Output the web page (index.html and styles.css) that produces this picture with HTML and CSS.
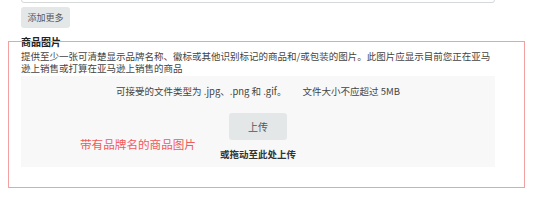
FILE: index.html
```html
<!DOCTYPE html>
<html lang="zh-CN">
<head>
    <meta charset="UTF-8">
    <meta name="viewport" content="width=device-width, initial-scale=1.0">
    <title>商品图片</title>
    <link rel="stylesheet" href="styles.css">
</head>
<body>
    <div class="container">
        <div class="prev-field"></div>
        <button class="add-more">添加更多</button>

        <!-- 商品图片 -->
        <div class="image-section">
            <div class="section-title">商品图片</div>
            <p class="section-desc">提供至少一张可清楚显示品牌名称、徽标或其他识别标记的商品和/或包装的图片。此图片应显示目前您正在亚马逊上销售或打算在亚马逊上销售的商品</p>
            <div class="drop-zone">
                <div class="file-rules">
                    <span>可接受的文件类型为 .jpg、.png 和 .gif。</span>
                    <span>文件大小不应超过 5MB</span>
                </div>
                <button class="upload-btn">上传</button>
                <div class="drag-hint">或拖动至此处上传</div>
            </div>
        </div>
    </div>

    <div class="highlight-box"></div>
    <div class="highlight-label">带有品牌名的商品图片</div>
</body>
</html>
```

FILE: styles.css
```css
body {
    margin: 0;
    padding: 0;
    background-color: #fff;
    font-family: "Noto Sans CJK SC", "Noto Sans", sans-serif;
    color: #333;
}
.container {
    width: 474px;
    padding-left: 21px;
}
.prev-field {
    height: 22px;
    margin-top: -21px;
    border: 1px solid #d5d9d9;
    border-radius: 3px;
    background-color: #fff;
}
.add-more {
    display: block;
    margin-top: 4px;
    width: 49px;
    height: 21px;
    padding: 0;
    border: none;
    border-radius: 3px;
    background-color: #e3e7e8;
    color: #555;
    font-family: inherit;
    font-size: 9px;
}
.image-section {
    margin-top: 8px;
}
.section-title {
    font-size: 10px;
    font-weight: bold;
    line-height: 12px;
    color: #222;
}
.section-desc {
    margin: 3px 0 0;
    font-size: 9.5px;
    line-height: 11.5px;
    color: #444;
}
.drop-zone {
    margin-top: 2px;
    height: 91px;
    background-color: #f8f8f8;
    text-align: center;
}
.file-rules {
    padding-top: 9px;
    font-size: 9.5px;
    line-height: 12px;
    color: #444;
}
.file-rules span + span {
    margin-left: 14px;
}
.upload-btn {
    margin-top: 16px;
    width: 58px;
    height: 27px;
    padding: 0;
    border: none;
    border-radius: 3px;
    background-color: #e3e7e8;
    color: #555;
    font-family: inherit;
    font-size: 10px;
}
.drag-hint {
    margin-top: 8px;
    font-size: 9.5px;
    line-height: 13px;
    font-weight: bold;
    color: #333;
}
.highlight-box {
    position: absolute;
    left: 8px;
    top: 41px;
    width: 515px;
    height: 145px;
    border: 1px solid #f2a0a0;
}
.highlight-label {
    position: absolute;
    left: 80px;
    top: 136px;
    font-size: 11.6px;
    color: #f05a5a;
}
```
